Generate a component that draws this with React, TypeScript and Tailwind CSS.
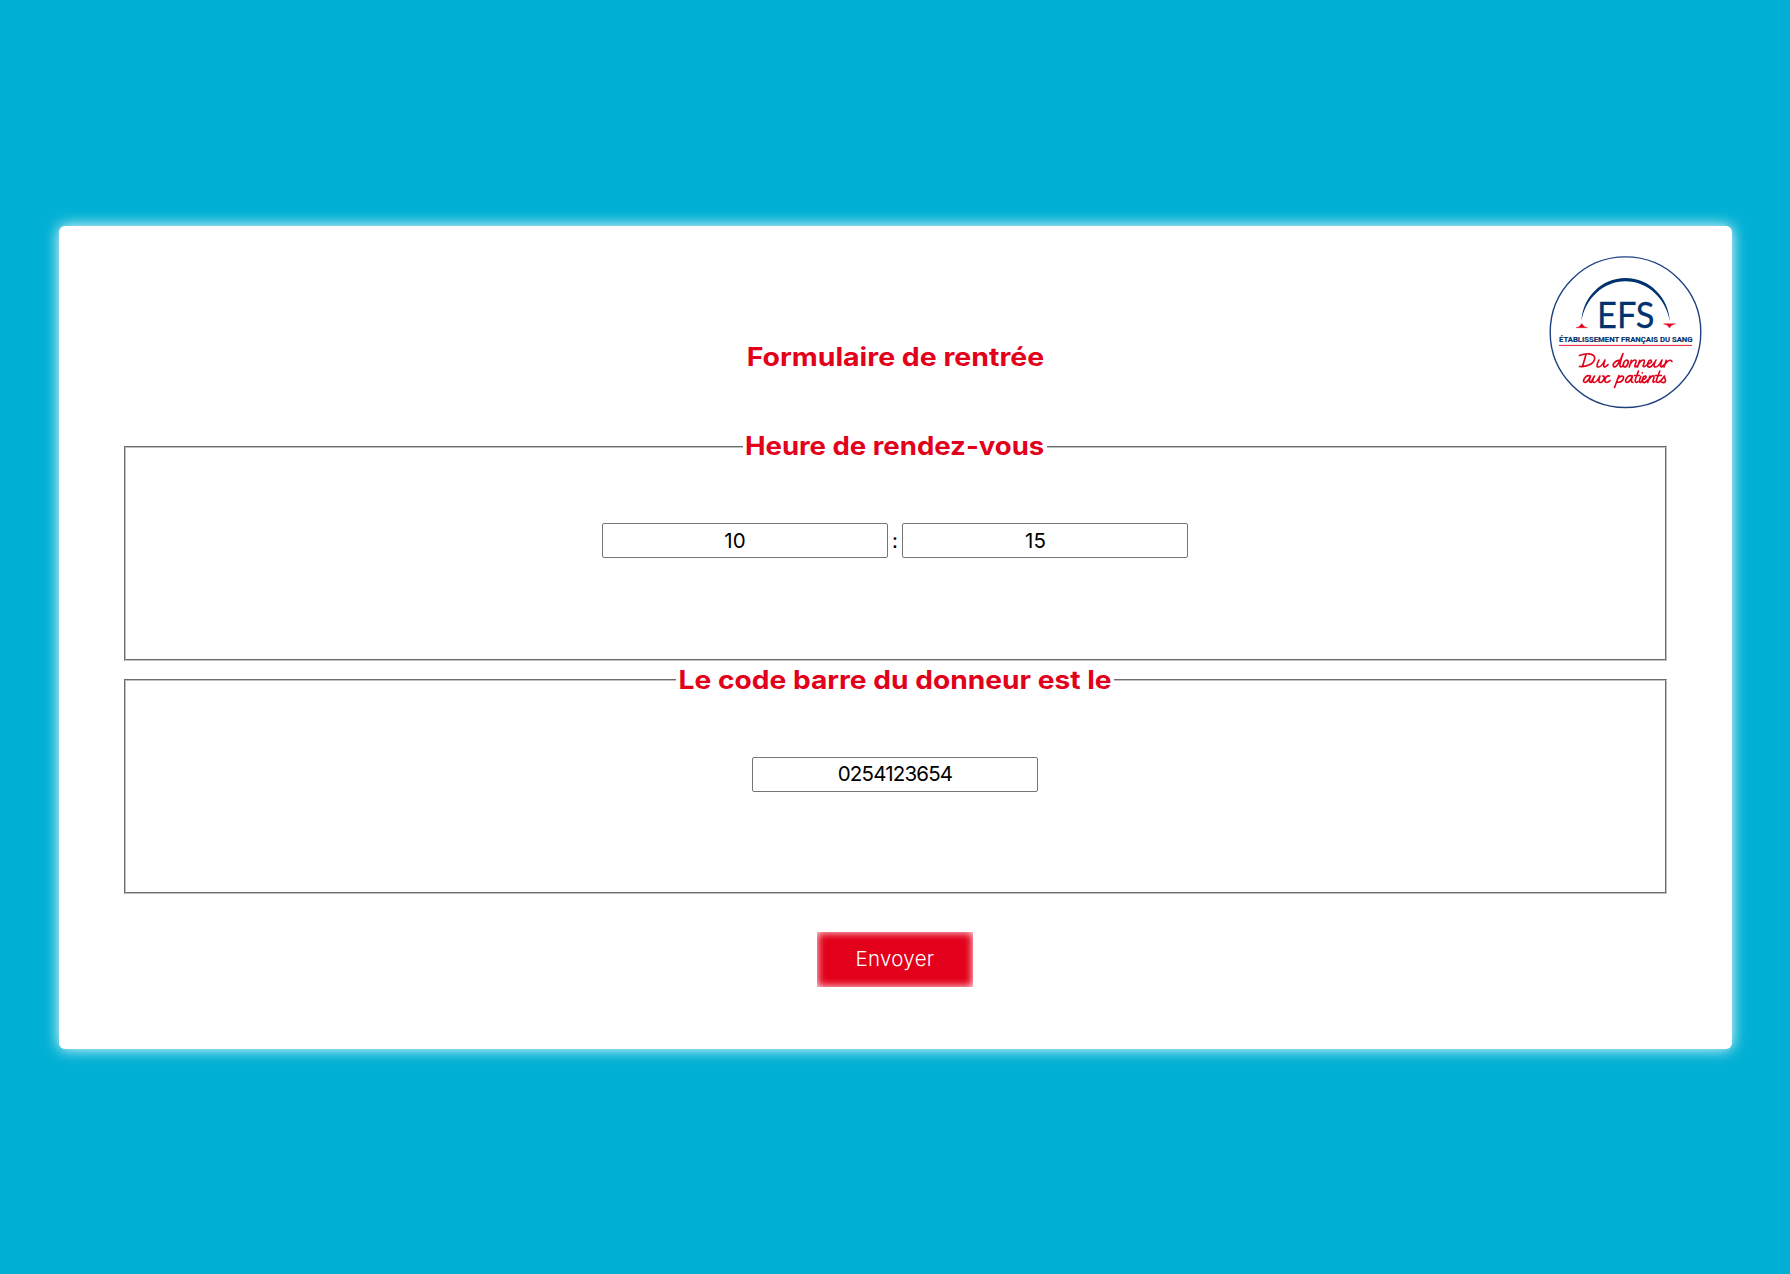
import type { ReactNode } from "react";

function Logo() {
  return (
    <svg viewBox="0 0 170 170" className="h-[170px] w-[170px]" role="img" aria-label="EFS">
      <circle cx="85.5" cy="86.2" r="75.3" fill="#fff" stroke="#1d4080" strokeWidth="1.4" />
      <path d="M41.500 75C42.500 52 61 32 85.500 32S128.500 52 129.800 75C126 53 108 35.200 85.500 35.200S45 53 41.500 75Z" fill="#00326f" />
      <path d="M36 81.700C39 81 40.500 79.500 41.700 77.400C43 79.500 44.500 81 47.500 81.700Z" fill="#e2001a" stroke="#e2001a" strokeWidth="0.4" />
      <path d="M123.500 77.800H135.500C132.500 78.500 130.500 80 129.500 82C128.500 80 126.500 78.500 123.500 77.800Z" fill="#e2001a" stroke="#e2001a" strokeWidth="0.4" />
      <text x="57" y="82" textLength="57.500" lengthAdjust="spacingAndGlyphs" fontSize="37.500" fill="#00326f" stroke="#00326f" strokeWidth="0.3" fontFamily="Lato, sans-serif">EFS</text>
      <text x="19" y="95.800" textLength="133.500" lengthAdjust="spacingAndGlyphs" fontSize="8.100" fontWeight="700" fill="#00326f" stroke="#00326f" strokeWidth="0.15" fontFamily="Roboto, sans-serif">ÉTABLISSEMENT FRANÇAIS DU SANG</text>
      <path d="M19 99.400H152" stroke="#e2001a" strokeWidth="0.9" />
      <g fill="none" stroke="#e2001a" strokeWidth="1.65" strokeLinecap="round" strokeLinejoin="round">
        <path d="M46 108.500L42.500 120.500M39.500 109.500C48 106 56 108 54.500 113.500C53 118.500 46 121 39.500 120.500" />
        <path d="M59 114C57 118 56 121 58.500 121C61.500 121 63.500 117 65 114C63.500 118 63 121 65 121Q66.500 120.500 68 118.500" />
        <path d="M80 114.500C76 113.500 72 118.500 73.500 120.500C75.500 122.500 79.500 117.500 83 107.500C80 116 79 121 81 121Q82 121 83.500 119" />
        <path d="M87 114C83.500 114.500 82 120.500 84.500 121C87.500 121 89.500 115 87 114" />
        <path d="M91.500 114.300L89.200 121M90 118.500C92 115.500 94.500 113.500 95.800 114.300C97 115.200 94.800 118.500 94.800 120.200Q95.200 121.500 97 120" />
        <path d="M99.800 114.300L97.500 121M98.300 118.500C100.300 115.500 102.800 113.500 104.100 114.300C105.300 115.200 103.100 118.500 103.100 120.200Q103.700 121.500 106 119.500" />
        <path d="M107 118.500C110.500 117.500 112.500 115.500 111 114.300C108.500 113.500 106 120 108.500 121C110.500 121.500 112.500 119.500 114.500 116.500" />
        <path d="M116 114C114 118 113 121 115.500 121C118 121 120.500 117 122 114C120.500 118 120 121 121.500 121L124 119M126.300 114.300L124 121M124.800 118.500C127 115.500 129 113.500 131 114.500L132 115.500" />
        <path d="M50 130C46 128.500 42.500 134 44 136C46 138 49.500 133 50.500 130C49 134 49 136.500 51 136.500L54.500 130C52.500 134 52 136.500 54 136.500C56.500 136.500 58.500 133 60 130C58.500 134 58.500 136.500 60 136.500" />
        <path d="M62.500 130C66.500 129.500 63 136.500 60.500 136.500M69.500 130C65.500 129 63 136.500 66.500 136.500Q68.500 136.500 70 134.500" />
        <path d="M79 129.500L74.500 141.500M77.500 133C80 129.500 84 129 83.500 132C83 135 79.500 137 77.500 136" />
        <path d="M92 130C88 128.500 84.500 134 86 136C88 138 91.500 133 92.500 130C91 134 91 136.500 93 136.500M98.500 125L95.500 133Q94.500 136.500 96.500 136.500L98 135.500M94.500 129.500H99.500" />
        <path d="M100.800 130.500C99 134.500 99 136.500 100.500 136.500L102 135" />
        <path d="M102.500 134C105.500 133 107 131 105.500 130C103 129.500 101 135.500 103.500 136.500C105 137 106.500 135.500 107.500 134M110 130L107.700 136.500M108.500 134C110.500 131 112.500 129.300 113.800 130C114.800 131 113 134 113 135.500Q113.300 137 115 135.500" />
        <path d="M119.800 125L116.500 134Q116 136.500 118 136.500C120 136 122.500 133 124.500 130C123.500 132 127 134 125 136C123.500 137 121.500 136.500 121 135.500M115.500 129.500H121.500" />
      </g>
      <circle cx="102.300" cy="126.800" r="0.900" fill="#e2001a" />
    </svg>
  );
}

function Group({ title, children }: { title: ReactNode; children: ReactNode }) {
  return (
    <fieldset className="h-[231px] w-full [border:2px_groove_rgb(192,192,192)]">
      {title}
      {children}
    </fieldset>
  );
}

const field =
  "h-[35px] w-[286px] rounded-[2px] border border-[#767676] bg-white text-center text-[20.5px] text-black outline-none";
const legend =
  "mx-auto flex justify-center text-[25.5px] leading-[34px] font-bold whitespace-nowrap text-[#e2001a]";

export default function App() {
  return (
    <main className="flex h-[1274px] w-full items-center justify-center bg-[#00b0d4] font-[Inter,sans-serif]">
      <form
        className="relative mt-px flex h-[823px] w-[1673px] flex-col items-center rounded-[6px] bg-white px-[65px] shadow-[0_0_15px_#fff]"
        onSubmit={(e) => e.preventDefault()}
      >
        <div className="absolute top-[20px] right-[22px]">
          <Logo />
        </div>
        <h1 className="mt-[115px] scale-x-[1.115] text-[25.5px] leading-[32px] font-bold text-[#e2001a]">
          Formulaire de rentrée
        </h1>
        <div className="mt-[57px] flex w-full flex-col gap-[2px]">
          <Group
            title={
              <legend className={`${legend} w-[304px]`}>
                <span className="-mt-px inline-block scale-x-[1.08]">Heure de rendez-vous</span>
              </legend>
            }
          >
            <div className="flex justify-center pt-[60px]">
              <input className={`${field} pr-[20px]`} defaultValue="10" aria-label="Heures" />
              <span className="w-[14px] text-center text-[20.5px] leading-[35px]">:</span>
              <input className={`${field} pr-[19px]`} defaultValue="15" aria-label="Minutes" />
            </div>
          </Group>
          <Group
            title={
              <legend className={`${legend} w-[438px]`}>
                <span className="inline-block scale-x-[1.104]">Le code barre du donneur est le</span>
              </legend>
            }
          >
            <div className="flex justify-center pt-[60px]">
              <input className={`${field} pb-[2px] tracking-[-0.8px]`} defaultValue="0254123654" aria-label="Code barre" />
            </div>
          </Group>
        </div>
        <button className="mt-[38px] h-[55px] w-[156px] bg-[#e2001a] text-[20.5px] font-light tracking-[0.3px] text-white shadow-[inset_0_0_8px_#fff]">
          Envoyer
        </button>
      </form>
    </main>
  );
}
